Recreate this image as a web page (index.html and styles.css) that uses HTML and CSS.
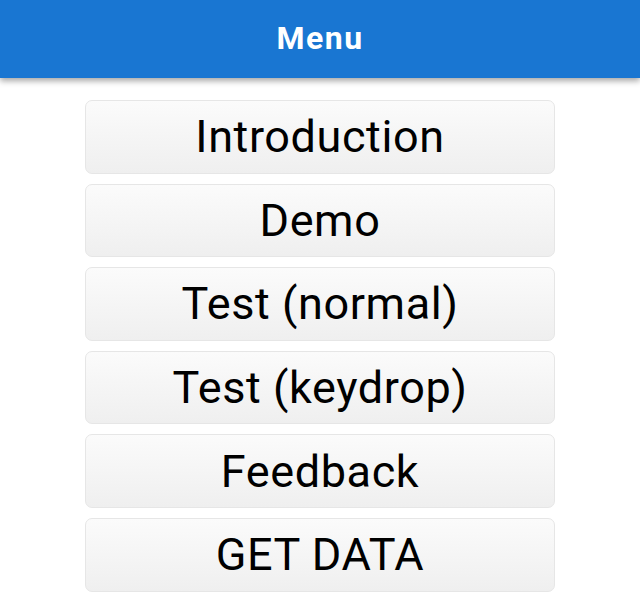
FILE: index.html
```html
<!DOCTYPE html>
<html>
<head>
<meta charset="utf-8">
<link rel="stylesheet" href="styles.css">
</head>
<body>
<header class="bar"><h1 class="title">Menu</h1></header>
<main class="menu">
  <button class="item">Introduction</button>
  <button class="item">Demo</button>
  <button class="item">Test (normal)</button>
  <button class="item">Test (keydrop)</button>
  <button class="item">Feedback</button>
  <button class="item">GET DATA</button>
</main>
</body>
</html>
```
FILE: styles.css
```css
html, body { margin: 0; padding: 0; background: #fff; }
body { font-family: Roboto, "Noto Sans", sans-serif; width: 640px; height: 612px; overflow: hidden; }
.bar {
  height: 78px;
  background: #1976d2;
  display: flex;
  align-items: center;
  justify-content: center;
  box-shadow: 0 3px 6px rgba(0,0,0,0.35);
  position: relative;
  z-index: 1;
}
.title { margin: 0; color: #fff; font-size: 32px; font-weight: 700; letter-spacing: 1.5px; padding-bottom: 2px; }
.menu {
  display: flex;
  flex-direction: column;
  align-items: center;
  gap: 10px;
  padding-top: 22px;
}
.item {
  width: 470px;
  height: 73.6px;
  border: 1px solid #e6e6e6;
  border-radius: 7px;
  background: linear-gradient(#fbfbfb, #efefef);
  font-family: Roboto, sans-serif;
  font-size: 45px;
  letter-spacing: 0.6px;
  color: #000;
  padding: 0;
}
```
